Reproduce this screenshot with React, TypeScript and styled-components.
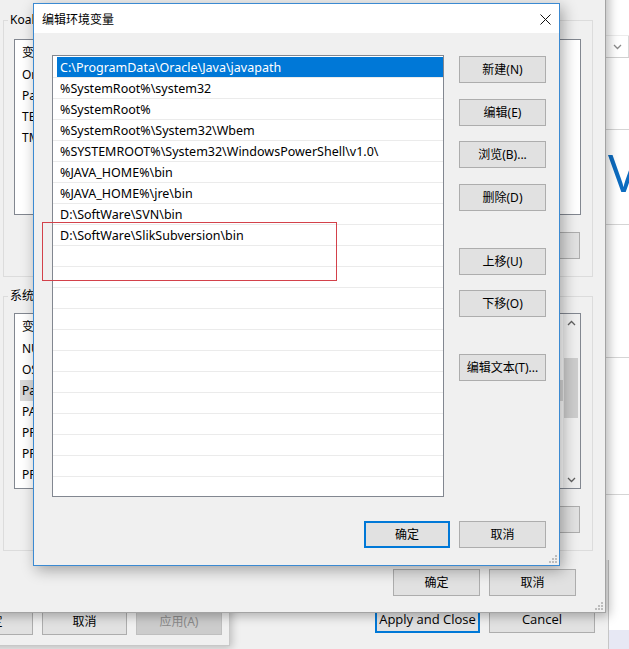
import React from "react";
import styled, { createGlobalStyle } from "styled-components";

const FONT = `"Noto Sans", "Noto Sans CJK SC", sans-serif`;

const GlobalStyle = createGlobalStyle`
  html, body { margin: 0; padding: 0; background: #fff; }
  body { font-family: ${FONT}; font-size: 12px; color: #000; }
  * { box-sizing: border-box; }
`;

const Desktop = styled.div`
  position: relative;
  width: 629px;
  height: 649px;
  overflow: hidden;
  background: #fff;
  font-family: ${FONT};
  font-size: 12px;
`;

/* ---------- Eclipse main window (far right, white) ---------- */
const EclipseMain = styled.div`
  position: absolute;
  left: 600px;
  top: 0;
  width: 40px;
  height: 649px;
  background: #fff;
  display: flex;
  flex-direction: column;
`;

const Band = styled.div<{ $h?: number; $line?: boolean }>`
  flex: ${(p) => (p.$h ? "none" : "1")};
  height: ${(p) => (p.$h ? `${p.$h}px` : "auto")};
  border-bottom: ${(p) => (p.$line ? "1px solid #d5d5d5" : "none")};
`;

const Dropdown = styled.div`
  height: 23px;
  border-top: 1px solid #ececec;
  border-bottom: 1px solid #d0d0d0;
  display: flex;
  align-items: center;
  padding-left: 13px;
`;

const DropDivider = styled.div`
  width: 1px;
  align-self: stretch;
  background: #d9d9d9;
  margin-left: 6px;
`;

const HeadingBand = styled.div`
  height: 95px;
  border-bottom: 1px solid #d5d5d5;
  padding: 16px 0 0 8px;
`;

const BigHeading = styled.div`
  font-family: "Open Sans", sans-serif;
  font-size: 52px;
  line-height: 52px;
  color: #0d6cc0;
  white-space: nowrap;
`;

const StatusStrip = styled.div`
  height: 19px;
  background: #e7e8f4;
`;

/* ---------- Eclipse preferences window (bottom strip) ---------- */
const PrefsWindow = styled.div`
  position: absolute;
  left: 0;
  top: 560px;
  width: 609px;
  height: 100px;
  background: #f0f0f0;
  border-right: 1px solid #c6c6c6;
  display: flex;
  justify-content: flex-end;
  align-items: flex-start;
  gap: 9px;
  padding: 46px 13px 0 0;
`;

/* ---------- System properties window (bottom left) ---------- */
const SysPropsWindow = styled.div`
  position: absolute;
  left: -200px;
  top: 450px;
  width: 430px;
  height: 196px;
  background: #f0f0f0;
  border: 1px solid #c8c8c8;
  box-shadow: 2px 2px 8px rgba(0, 0, 0, 0.22);
  display: flex;
  justify-content: flex-end;
  align-items: flex-end;
  gap: 9px;
  padding: 0 7px 10px 0;
`;

/* ---------- Buttons ---------- */
const Btn = styled.button<{ $w?: number; $focus?: boolean; $off?: boolean; $mt?: number; $latin?: boolean }>`
  flex: none;
  width: ${(p) => p.$w ?? 86}px;
  height: 27px;
  margin: ${(p) => p.$mt ?? 0}px 0 0 0;
  padding: 0;
  background: ${(p) => (p.$off ? "#cccccc" : "#e1e1e1")};
  border: ${(p) =>
    p.$focus ? "2px solid #0078d7" : `1px solid ${p.$off ? "#bfbfbf" : "#adadad"}`};
  color: ${(p) => (p.$off ? "#8a8a8a" : "#000")};
  font-family: ${(p) => (p.$latin ? `"Open Sans", sans-serif` : FONT)};
  font-size: ${(p) => (p.$latin ? 13 : 12)}px;
  line-height: 1;
  display: flex;
  align-items: center;
  justify-content: center;
  white-space: nowrap;
`;

/* ---------- Environment variables window (middle) ---------- */
const EnvWindow = styled.div`
  position: absolute;
  left: -10px;
  top: -20px;
  width: 616px;
  height: 633px;
  background: #f0f0f0;
  border: 1px solid #a3a3a3;
  box-shadow: 3px 3px 10px rgba(0, 0, 0, 0.28);
  display: flex;
  flex-direction: column;
  padding: 32px 12px 0 12px;
`;

const Group = styled.fieldset<{ $mt?: number; $pt: number }>`
  margin: ${(p) => p.$mt ?? 0}px 0 0 0;
  min-width: 0;
  border: 1px solid #dcdcdc;
  padding: ${(p) => p.$pt}px 11px 17px 10px;
`;

const Legend = styled.legend`
  padding: 0 2px;
  margin-left: -6px;
  line-height: 14px;
  font-size: 12px;
  white-space: nowrap;
`;

const ListView = styled.div`
  height: 176px;
  background: #fff;
  border: 1px solid #828790;
  display: flex;
  overflow: hidden;
`;

const ListColumn = styled.div`
  flex: 1;
  min-width: 0;
  display: flex;
  flex-direction: column;
`;

const ListHeader = styled.div`
  height: 24px;
  flex: none;
  display: flex;
  align-items: center;
  padding-left: 7px;
`;

const ListItem = styled.div<{ $sel?: boolean }>`
  height: 21px;
  flex: none;
  display: flex;
  align-items: center;
  margin-left: 5px;
  padding-left: 2px;
  background: ${(p) => (p.$sel ? "#d9d9d9" : "transparent")};
  white-space: nowrap;
`;

const ScrollBar = styled.div`
  width: 17px;
  flex: none;
  background: #f0f0f0;
  display: flex;
  flex-direction: column;
`;

const ScrollArrow = styled.div`
  height: 17px;
  flex: none;
  display: flex;
  align-items: center;
  justify-content: center;
`;

const ScrollTrack = styled.div`
  flex: 1;
  display: flex;
  flex-direction: column;
  padding: 27px 2px 0 1px;
`;

const ScrollThumb = styled.div`
  height: 60px;
  background: #cdcdcd;
`;

const ButtonRow = styled.div<{ $mt: number; $pr?: number; $gap?: number }>`
  display: flex;
  justify-content: flex-end;
  gap: ${(p) => p.$gap ?? 9}px;
  margin-top: ${(p) => p.$mt}px;
  padding-right: ${(p) => p.$pr ?? 1}px;
`;

/* ---------- Edit environment variable window (top) ---------- */
const EditWindow = styled.div`
  position: absolute;
  left: 33px;
  top: 3px;
  width: 527px;
  height: 563px;
  background: #f0f0f0;
  border: 1px solid #3b8ad2;
  box-shadow: 3px 4px 14px rgba(0, 0, 0, 0.33);
  display: flex;
  flex-direction: column;
`;

const TitleBar = styled.div`
  height: 29px;
  flex: none;
  background: #fff;
  display: flex;
  align-items: center;
  justify-content: space-between;
  padding-left: 8px;
`;

const Title = styled.span`
  font-size: 12px;
  padding-top: 1px;
`;

const CloseBtn = styled.div`
  width: 28px;
  height: 29px;
  display: flex;
  align-items: center;
  justify-content: center;
  padding-top: 1px;
`;

const EditBody = styled.div`
  flex: 1;
  display: grid;
  grid-template-columns: 392px 87px;
  grid-template-rows: 442px 27px;
  column-gap: 15px;
  row-gap: 24px;
  padding: 22px 13px 17px 18px;
`;

const PathList = styled.div`
  background: #fff;
  border: 1px solid #828790;
  padding-top: 1px;
  overflow: hidden;
`;

const PathRow = styled.div`
  height: 21px;
  border-bottom: 1px solid #ebebeb;
  display: flex;
`;

const PathCell = styled.div<{ $sel?: boolean }>`
  flex: 1;
  margin-left: 4px;
  padding-left: 3px;
  display: flex;
  align-items: center;
  background: ${(p) => (p.$sel ? "#0078d7" : "transparent")};
  color: ${(p) => (p.$sel ? "#fff" : "#000")};
  white-space: nowrap;
  font-size: 12.5px;
`;

const SideButtons = styled.div`
  display: flex;
  flex-direction: column;
`;

const BottomRow = styled.div`
  grid-column: 1 / -1;
  display: flex;
  justify-content: flex-end;
  gap: 9px;
`;

const Grip = styled.svg<{ $r: number; $b: number }>`
  position: absolute;
  right: ${(p) => p.$r}px;
  bottom: ${(p) => p.$b}px;
`;

const Annotation = styled.div`
  position: absolute;
  left: 42px;
  top: 222px;
  width: 295px;
  height: 59px;
  border: 1px solid #d3414a;
`;

const GripIcon = ({ r, b }: { r: number; b: number }) => (
  <Grip $r={r} $b={b} width="8" height="8" viewBox="0 0 8 8">
    {[
      [6, 0],
      [3, 3],
      [6, 3],
      [0, 6],
      [3, 6],
      [6, 6],
    ].map(([x, y], i) => (
      <rect key={i} x={x} y={y} width="2" height="2" fill="#bdbdbd" />
    ))}
  </Grip>
);

const Chevron = ({ up, color = "#606060" }: { up?: boolean; color?: string }) => (
  <svg width="9" height="6" viewBox="0 0 9 6">
    <path
      d={up ? "M1 5 L4.5 1.5 L8 5" : "M1 1 L4.5 4.5 L8 1"}
      stroke={color}
      strokeWidth="1.3"
      fill="none"
    />
  </svg>
);

const paths = [
  "C:\\ProgramData\\Oracle\\Java\\javapath",
  "%SystemRoot%\\system32",
  "%SystemRoot%",
  "%SystemRoot%\\System32\\Wbem",
  "%SYSTEMROOT%\\System32\\WindowsPowerShell\\v1.0\\",
  "%JAVA_HOME%\\bin",
  "%JAVA_HOME%\\jre\\bin",
  "D:\\SoftWare\\SVN\\bin",
  "D:\\SoftWare\\SlikSubversion\\bin",
];
const pathRows = [...paths, ...Array(12).fill("")];

const userVars = ["OneDrive", "Path", "TEMP", "TMP"];
const sysVars = [
  "NUMBER_OF_PROCESSORS",
  "OS",
  "Path",
  "PATHEXT",
  "PROCESSOR_ARCHITECTURE",
  "PROCESSOR_IDENTIFIER",
  "PROCESSOR_LEVEL",
];

const sideButtons: [string, number][] = [
  ["新建(N)", 1],
  ["编辑(E)", 16],
  ["浏览(B)...", 15],
  ["删除(D)", 16],
  ["上移(U)", 37],
  ["下移(O)", 15],
  ["编辑文本(T)...", 37],
];

export default function App() {
  return (
    <>
      <GlobalStyle />
      <Desktop>
        <EclipseMain>
          <Band $h={35} />
          <Dropdown>
            <Chevron color="#8a8a8a" />
            <DropDivider />
          </Dropdown>
          <Band $h={72} $line />
          <HeadingBand>
            <BigHeading>V</BigHeading>
          </HeadingBand>
          <Band $h={133} $line />
          <Band $h={137} $line />
          <Band />
          <StatusStrip />
        </EclipseMain>

        <PrefsWindow>
          <Btn $w={105} $focus $latin>
            Apply and Close
          </Btn>
          <Btn $w={106} $latin>
            Cancel
          </Btn>
        </PrefsWindow>

        <SysPropsWindow>
          <Btn $w={85}>确定</Btn>
          <Btn $w={85}>取消</Btn>
          <Btn $w={86} $off>
            应用(A)
          </Btn>
        </SysPropsWindow>

        <EnvWindow>
          <Group $pt={12}>
            <Legend>Koala 的用户变量(U)</Legend>
            <ListView>
              <ListColumn>
                <ListHeader>变量</ListHeader>
                {userVars.map((v) => (
                  <ListItem key={v}>{v}</ListItem>
                ))}
              </ListColumn>
            </ListView>
            <ButtonRow $mt={17}>
              <Btn>新建(N)...</Btn>
              <Btn>编辑(E)...</Btn>
              <Btn>删除(D)</Btn>
            </ButtonRow>
          </Group>
          <Group $mt={12} $pt={10}>
            <Legend>系统变量(S)</Legend>
            <ListView>
              <ListColumn>
                <ListHeader>变量</ListHeader>
                {sysVars.map((v) => (
                  <ListItem key={v} $sel={v === "Path"}>
                    {v}
                  </ListItem>
                ))}
              </ListColumn>
              <ScrollBar>
                <ScrollArrow>
                  <Chevron up />
                </ScrollArrow>
                <ScrollTrack>
                  <ScrollThumb />
                </ScrollTrack>
                <ScrollArrow>
                  <Chevron />
                </ScrollArrow>
              </ScrollBar>
            </ListView>
            <ButtonRow $mt={17}>
              <Btn>新建(W)...</Btn>
              <Btn>编辑(I)...</Btn>
              <Btn>删除(L)</Btn>
            </ButtonRow>
          </Group>
          <ButtonRow $mt={18} $pr={17}>
            <Btn $w={87}>确定</Btn>
            <Btn $w={87}>取消</Btn>
          </ButtonRow>
          <GripIcon r={2} b={2} />
        </EnvWindow>

        <EditWindow>
          <TitleBar>
            <Title>编辑环境变量</Title>
            <CloseBtn>
              <svg width="11" height="11" viewBox="0 0 11 11">
                <path d="M0.5 0.5 L10.5 10.5 M10.5 0.5 L0.5 10.5" stroke="#111" strokeWidth="1" />
              </svg>
            </CloseBtn>
          </TitleBar>
          <EditBody>
            <PathList>
              {pathRows.map((p, i) => (
                <PathRow key={i}>
                  <PathCell $sel={i === 0}>{p}</PathCell>
                </PathRow>
              ))}
            </PathList>
            <SideButtons>
              {sideButtons.map(([label, mt]) => (
                <Btn key={label} $w={87} $mt={mt}>
                  {label}
                </Btn>
              ))}
            </SideButtons>
            <BottomRow>
              <Btn $w={86} $focus>
                确定
              </Btn>
              <Btn $w={87}>取消</Btn>
            </BottomRow>
          </EditBody>
          <GripIcon r={2} b={2} />
        </EditWindow>

        <Annotation />
      </Desktop>
    </>
  );
}
